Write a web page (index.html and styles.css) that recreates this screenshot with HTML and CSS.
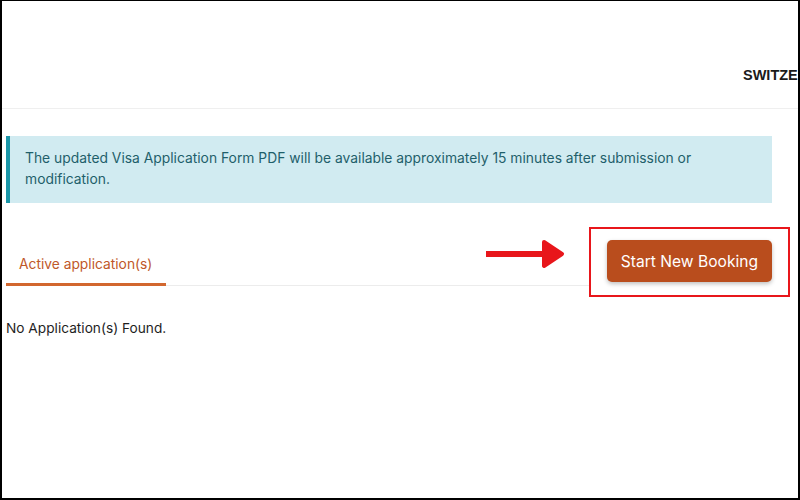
FILE: index.html
```html
<!DOCTYPE html>
<html lang="en">
<head>
<meta charset="utf-8">
<title>Applications</title>
<link rel="stylesheet" href="styles.css">
</head>
<body>
<div class="frame">
  <header class="topbar">
    <span class="country">SWITZERLAND</span>
  </header>
  <main class="content">
    <div class="alert">The updated Visa Application Form PDF will be available approximately 15 minutes after submission or modification.</div>
    <div class="tab-row">
      <nav class="tabs">
        <span class="tab active">Active application(s)</span>
      </nav>
      <svg class="arrow" width="80" height="30" viewBox="0 0 80 30" aria-hidden="true">
        <rect x="0" y="12" width="62" height="6" fill="#e8161b"/>
        <polygon points="58,3 76,15 58,27" fill="#e8161b" stroke="#e8161b" stroke-width="4" stroke-linejoin="round"/>
      </svg>
      <div class="highlight">
        <button class="btn-primary" type="button">Start New Booking</button>
      </div>
    </div>
    <p class="empty">No Application(s) Found.</p>
  </main>
</div>
</body>
</html>
```

FILE: styles.css
```css
* { box-sizing: border-box; }

html, body {
  margin: 0;
  padding: 0;
  background: #fff;
}

body {
  font-family: "Inter", "Noto Sans", sans-serif;
  color: #222;
}

.frame {
  width: 800px;
  height: 500px;
  border: 2px solid #000;
  border-top-width: 1px;
  overflow: hidden;
  background: #fff;
}

.topbar {
  height: 108px;
  border-bottom: 1px solid #efefef;
  padding-top: 63px;
  padding-left: 741px;
  white-space: nowrap;
}

.country {
  font-family: "Liberation Sans", Arial, sans-serif;
  font-weight: 700;
  font-size: 14.5px;
  line-height: 20px;
  color: #1a1a1a;
}

.content {
  padding: 0 8px 0 4px;
}

.alert {
  margin: 27px 18px 0 0;
  background: #d1ebf1;
  border-left: 4px solid #1a96a8;
  color: #1f5f6b;
  font-size: 13.85px;
  line-height: 21px;
  padding: 12px 15px 13px 15px;
}

.tab-row {
  position: relative;
  display: flex;
  align-items: flex-start;
  margin-top: 24px;
}

.tabs {
  flex: 1;
  height: 59px;
  display: flex;
  align-items: flex-end;
  border-bottom: 1px solid #ececec;
}

.tab {
  font-size: 13.8px;
  line-height: 20px;
  padding: 0 14px 9px 13px;
  border-bottom: 3px solid transparent;
  margin-bottom: -1px;
}

.tab.active {
  color: #c0582a;
  border-bottom-color: #d2672f;
}

.arrow {
  position: absolute;
  left: 480px;
  top: 12px;
}

.highlight {
  border: 2px solid #e8161b;
  padding: 11px 16px 13px 16px;
}

.btn-primary {
  display: block;
  height: 42px;
  padding: 0 14px;
  border: 0;
  border-radius: 5px;
  background: #b94d1d;
  color: #fff;
  font-family: "Inter", "Noto Sans", sans-serif;
  font-size: 15.6px;
  box-shadow: 0 2px 4px rgba(0, 0, 0, 0.25);
  white-space: nowrap;
}

.empty {
  margin: 21px 0 0 0;
  font-size: 13.7px;
  line-height: 20px;
  color: #1e1e1e;
}
```
